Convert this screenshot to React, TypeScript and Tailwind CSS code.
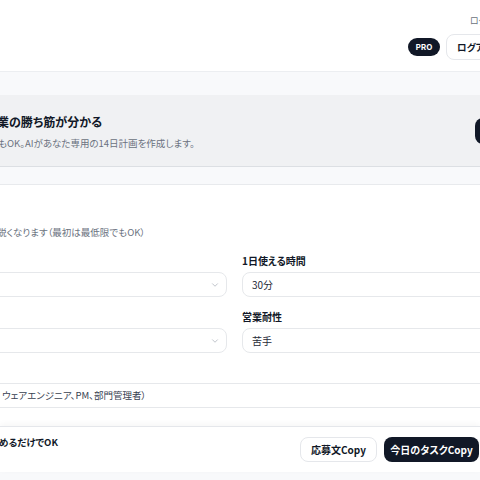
import React from 'react';
import { ChevronDown } from 'lucide-react';

const jp = "font-['Noto_Sans_CJK_JP','Noto_Sans',sans-serif] [font-feature-settings:'palt']";

function SelectBox() {
  return (
    <div className="h-[25px] rounded-lg border border-[#e6e8eb] bg-white flex items-center justify-end pr-[6px]">
      <ChevronDown className="w-[10px] h-[10px] text-[#9aa1ab]" strokeWidth={1.5} />
    </div>
  );
}

function TextBox({ value }: { value: string }) {
  return (
    <div className="h-[25px] rounded-lg border border-[#e6e8eb] bg-white flex items-center pl-[9px] text-[10px] text-[#1f2937]">
      {value}
    </div>
  );
}

export default function App() {
  return (
    <div className={`w-[480px] h-[480px] overflow-hidden bg-[#f8f9fb] flex flex-col ${jp}`}>
      {/* Header */}
      <header className="h-[72px] shrink-0 bg-white border-b border-[#eceef1] pt-[14px]">
        <p className="pl-[470px] whitespace-nowrap text-[9px] leading-[14px] text-[#6b7280]">
          ログイン中
        </p>
        <div className="flex items-center gap-[6px] pl-[408px] mt-[6px] whitespace-nowrap">
          <span className="w-[32px] h-[18px] shrink-0 rounded-full bg-[#111827] text-white text-[8px] font-bold flex items-center justify-center">
            PRO
          </span>
          <button className="h-[26px] shrink-0 px-[10px] rounded-lg border border-[#e5e7eb] bg-white text-[9.5px] font-bold text-[#111827]">
            ログアウト
          </button>
        </div>
      </header>

      {/* Banner */}
      <section className="mt-[23px] h-[72px] shrink-0 bg-[#f0f1f3] border-b border-[#dcdfe3] flex items-center whitespace-nowrap">
        <div className="w-[475px] shrink-0">
          <h2 className="-ml-[3px] text-[12px] leading-[18px] font-bold text-[#111827]">
            業の勝ち筋が分かる
          </h2>
          <p className="mt-[6px] -ml-[2px] text-[9.5px] leading-[12px] text-[#6b7280]">
            もOK。AIがあなた専用の14日計画を作成します。
          </p>
        </div>
        <button className="h-[26px] w-[90px] shrink-0 rounded-lg bg-[#111827] text-white text-[10px] font-bold">
          分析する
        </button>
      </section>

      {/* Form card */}
      <section className="mt-[17px] flex-1 bg-white border-t border-[#e8eaed] pt-[40px] whitespace-nowrap">
        <p className="-ml-[3px] text-[9.5px] leading-[14px] text-[#6b7280]">
          鋭くなります（最初は最低限でもOK）
        </p>

        <div className="mt-[15px] -ml-[200px] w-[869px] grid grid-cols-2 gap-x-[15px]">
          <div>
            <p className="text-[10px] leading-[14px] font-bold text-[#111827]">年代</p>
            <div className="mt-[4px]">
              <SelectBox />
            </div>
          </div>
          <div>
            <p className="text-[10px] leading-[14px] font-bold text-[#111827]">1日使える時間</p>
            <div className="mt-[4px]">
              <TextBox value="30分" />
            </div>
          </div>
        </div>

        <div className="mt-[13px] -ml-[200px] w-[869px] grid grid-cols-2 gap-x-[15px]">
          <div>
            <p className="text-[10px] leading-[14px] font-bold text-[#111827]">目標月収</p>
            <div className="mt-[4px]">
              <SelectBox />
            </div>
          </div>
          <div>
            <p className="text-[10px] leading-[14px] font-bold text-[#111827]">営業耐性</p>
            <div className="mt-[4px]">
              <TextBox value="苦手" />
            </div>
          </div>
        </div>

        <div className="mt-[13px] -ml-[200px] w-[869px]">
          <p className="text-[10px] leading-[14px] font-bold text-[#111827]">本業の職種</p>
          <div className="mt-[3px] h-[25px] rounded-lg border border-[#e6e8eb] bg-white flex items-center pl-[201px] text-[9.5px] text-[#374151]">
            ウェアエンジニア、PM、部門管理者）
          </div>
        </div>
      </section>

      {/* Bottom bar */}
      <div className="h-[46px] shrink-0 bg-white border-t border-[#e5e7eb] shadow-[0_-2px_6px_rgba(0,0,0,0.04)] flex items-center justify-between pr-[1px] whitespace-nowrap">
        <div className="-ml-[1px]">
          <p className="text-[9.5px] leading-[15px] font-bold text-[#111827]">めるだけでOK</p>
          <p className="-ml-[6px] text-[9px] leading-[15px] text-[#9ca3af]">。</p>
        </div>
        <div className="flex items-center gap-[7px]">
          <button className="h-[25px] w-[77px] rounded-lg border border-[#e5e7eb] bg-white text-[10px] font-bold text-[#111827]">
            応募文Copy
          </button>
          <button className="h-[25px] w-[95px] rounded-lg bg-[#111827] text-white text-[10px] font-bold">
            今日のタスクCopy
          </button>
        </div>
      </div>
      <div className="h-[8px] shrink-0" />
    </div>
  );
}
